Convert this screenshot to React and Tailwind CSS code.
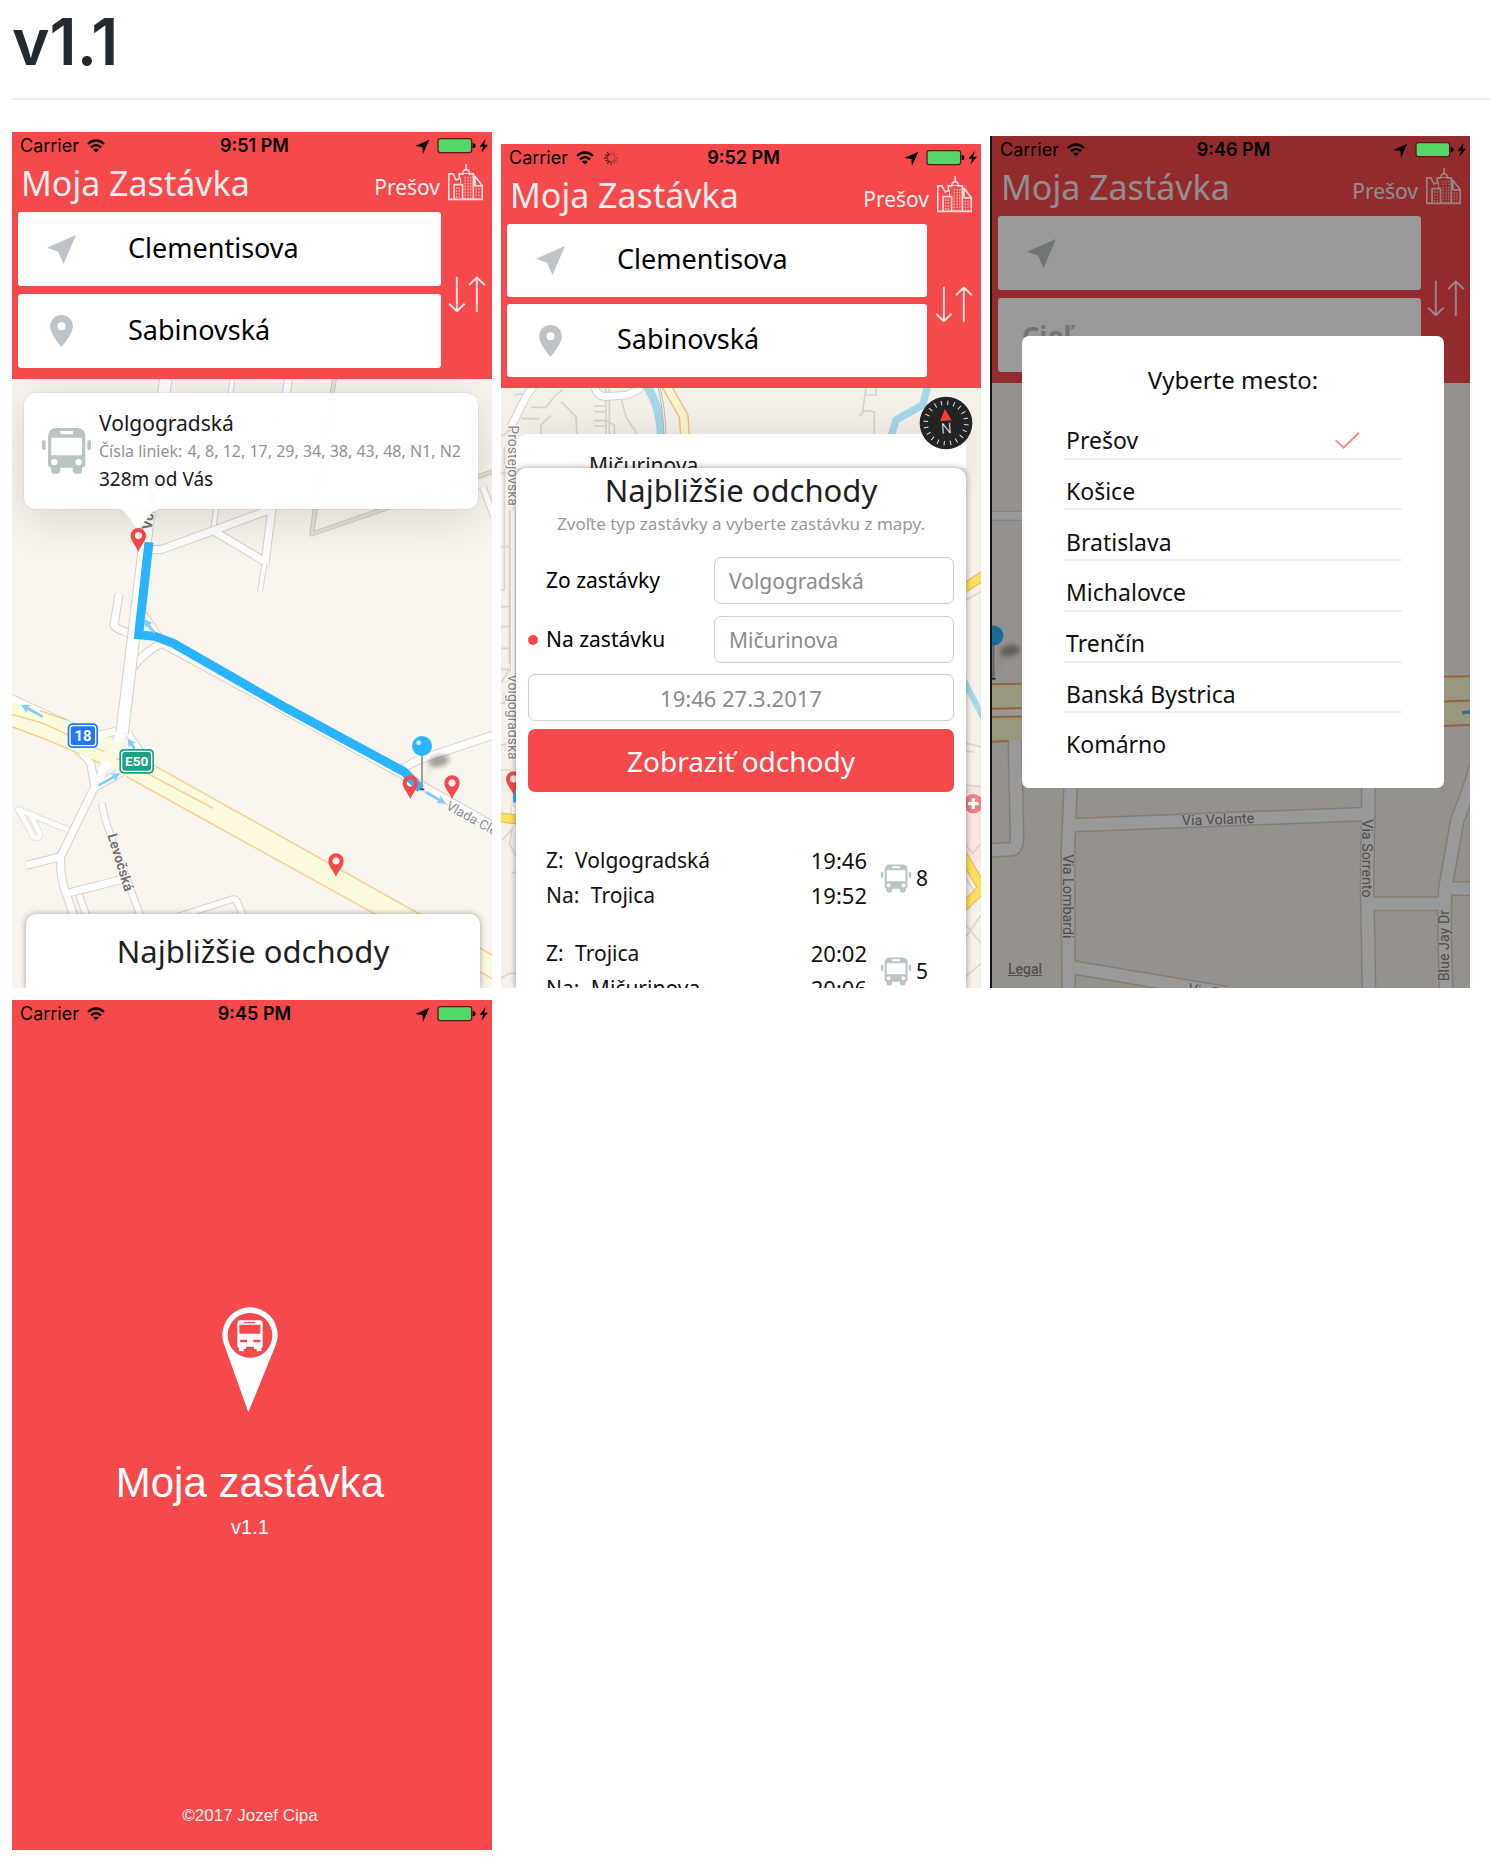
import React from "react";

const BODY = "font-['Noto_Sans',sans-serif]";
const SYSTEM = "font-['Inter',sans-serif]";

/* ---------- icons ---------- */

function WifiIcon() {
  return (
    <svg className="h-[14px] w-[18px]" viewBox="0 0 54 42" fill="none" stroke="#000" strokeWidth="7" aria-hidden="true">
      <path d="M3 15C17 1 37 1 51 15" />
      <path d="M12 25c9-9 21-9 30 0" />
      <path d="M27 40l-9-8c5-5 13-5 18 0z" fill="#000" stroke="none" />
    </svg>
  );
}

function SpinnerIcon() {
  return (
    <svg className="ml-[10px] h-[14px] w-[14px]" viewBox="0 0 42 42" stroke="#000" strokeWidth="3.5" aria-hidden="true">
      <path d="M21 0v12" opacity=".3" />
      <path d="M32 4l-6 9M38 11l-9 5" opacity=".25" />
      <path d="M42 21H30M38 31l-9-5M32 38l-6-9" opacity=".35" />
      <path d="M21 42V30" opacity=".55" />
      <path d="M10 38l6-9M4 31l9-5" opacity=".7" />
      <path d="M0 21h12M4 11l9 5M10 4l6 9" opacity=".85" />
    </svg>
  );
}

function StatusIcons() {
  return (
    <svg className="h-[16px] w-[74px] justify-self-end" viewBox="0 0 222 48" aria-hidden="true">
      <path d="M43 5L1 24l21 3 2 20z" fill="#000" />
      <rect x="69" y="2" width="101" height="42" rx="7" fill="#53d769" stroke="#5a1a1c" strokeWidth="4" />
      <path d="M173 15c7 1 9 5 9 8s-2 7-9 8z" fill="#000" />
      <path d="M212 2l-18 24h10l-5 18 20-24h-11z" fill="#000" />
    </svg>
  );
}

function CityIcon() {
  return (
    <svg className="h-[38px] w-[37px]" viewBox="1343 490 112 116" fill="none" stroke="#fff" strokeOpacity=".8" strokeWidth="5" aria-hidden="true">
      <path d="M1348 523v78h102v-42l-22-28h-5v-8h-12c0-8-4-12-10-13-6 1-10 5-10 13h-11v15l-10 4-9-19z" />
      <path d="M1401 493v17" strokeWidth="5" />
      <path d="M1364 600v-44h26v44M1423 531v69M1429 560h21M1428 532v28" />
      <path d="M1384 536v20M1394 522h20" strokeWidth="3" />
      <path
        d="M1372 564v34M1380 564v34M1398 532v68M1407 532v68M1415 532v68M1432 568v30M1440 568v30"
        strokeWidth="4"
        strokeDasharray="5 4"
        strokeOpacity=".6"
      />
    </svg>
  );
}

function SwapIcon() {
  return (
    <svg className="h-[37px] w-[38px]" viewBox="1348 827 116 112" fill="none" stroke="#fff" strokeOpacity=".82" strokeWidth="6" strokeLinecap="round" strokeLinejoin="round" aria-hidden="true">
      <path d="M1375 831v103M1353 913l22 21 22-21" />
      <path d="M1436 934V831M1414 853l22-22 23 22" />
    </svg>
  );
}

function NavIcon() {
  return (
    <svg className="h-[29px] w-[29px]" viewBox="0 0 86 86" fill="#bdc3c7" aria-hidden="true">
      <path d="M86 0L0 38l33 12 16 36z" />
    </svg>
  );
}

function PlaceIcon() {
  return (
    <svg className="h-[32px] w-[23px]" viewBox="0 0 68 96" fill="#bdc3c7" aria-hidden="true">
      <path fillRule="evenodd" d="M34 0a34 34 0 0 0-34 34c0 24 34 62 34 62s34-38 34-62A34 34 0 0 0 34 0zm0 22a12 12 0 1 1 0 24 12 12 0 0 1 0-24z" />
    </svg>
  );
}

function BusIcon({ className }) {
  return (
    <svg className={className} viewBox="126 174 147 138" fill="#b9c4c7" aria-hidden="true">
      <path
        fillRule="evenodd"
        d="M166 174h68q22 2 22 26v82q0 10-10 11v9q0 9-10 9h-8q-9 0-10-9v-9h-37v9q-1 9-10 9h-8q-10 0-10-9v-9q-9-1-9-11v-82q2-24 22-26zm15 9v10h38v-10zm-27 20v53h92v-53zm9 63a10 10 0 1 0 .1 0zm73 0a10 10 0 1 0 .1 0z"
      />
      <rect x="126" y="210" width="11" height="30" rx="5" />
      <rect x="262" y="210" width="11" height="30" rx="5" />
    </svg>
  );
}

/* ---------- map pieces ---------- */

function Roads({ width, children, casing = "#d9d0c6", fill = "#ffffff", edge = 6 }) {
  return (
    <g fill="none" strokeLinejoin="round">
      <g stroke={casing} strokeWidth={width + edge}>{children}</g>
      <g stroke={fill} strokeWidth={width}>{children}</g>
    </g>
  );
}

function Pin({ x, y }) {
  return (
    <path
      transform={`translate(${x} ${y})`}
      fill="#f5484b"
      fillRule="evenodd"
      d="M0 0c-3-14-23-32-23-49a23 23 0 0 1 46 0C23-32 3-14 0 0zM0-60a11 11 0 1 0 .1 0z"
    />
  );
}

function FlowArrow({ x, y, turn, length = 70 }) {
  return (
    <g transform={`translate(${x} ${y}) rotate(${turn})`} fill="#7fcbff">
      <rect x="0" y="-4" width={length - 18} height="8" />
      <path d={`M${length} 0l-26-13 6 13-6 13z`} />
    </g>
  );
}

function BallPin({ x, y }) {
  return (
    <g transform={`translate(${x} ${y})`}>
      <g filter="url(#soft)" opacity=".35">
        <ellipse cx="50" cy="45" rx="32" ry="17" fill="#000" transform="rotate(-12 50 45)" />
        <path d="M30 55L4 126" stroke="#000" strokeWidth="4" opacity=".4" />
      </g>
      <path d="M0 20v110" stroke="#9aa0a6" strokeWidth="6" />
      <path d="M-7 130h14" stroke="#444" strokeWidth="5" />
      <circle r="30" fill="#2ab4ff" />
      <circle cx="-10" cy="-10" r="7" fill="#d9f1ff" />
    </g>
  );
}

const halo = { paintOrder: "stroke", stroke: "#ffffff", strokeWidth: 6, strokeLinejoin: "round" };

function RouteMap() {
  return (
    <svg className="col-start-1 row-start-1 h-full w-full" viewBox="36 27 1440 1827" preserveAspectRatio="xMidYMin slice" fontFamily="Roboto, sans-serif" aria-label="Mapa" role="img">
      <defs>
        <filter id="soft" x="-50%" y="-50%" width="200%" height="200%">
          <feGaussianBlur stdDeviation="8" />
        </filter>
      </defs>
      <rect x="36" y="27" width="1440" height="1827" fill="#f9f4ed" />
      <Roads width={9} casing="#cdccba" fill="#e3e3d4"><path d="M1003 27L935 492L1480 304" /></Roads>
      <Roads width={12}>
        <path d="M697 27L640 480M795 570L780 665" />
      </Roads>
      <Roads width={14} casing="#e6e0d8"><path d="M210 1382L55 1318L100 1400Q118 1410 120 1392L92 1335" /></Roads>
      <Roads width={17}>
        <path d="M305 1300Q315 1350 330 1390L422 1640M235 1570L264 1650M535 1640L695 1588Q708 1585 714 1600L733 1650" />
        <path d="M1448 350L1482 440M428 730L482 805M385 1090L425 1150" />
      </Roads>
      <Roads width={21}>
        <path d="M455 540L485 538L640 482L820 415M640 482L795 575M865 27L795 580" />
        <path d="M357 672L342 765Q342 775 390 790M490 818Q440 840 400 890" />
        <path d="M80 1486L182 1460M200 1570L372 1527M290 1098L360 1080" />
        <path d="M490 822L1210 1215L1290 1260L1480 1368M1200 1200L1250 1172L1480 1095" />
        <path d="M285 1252L272 1180Q262 1160 230 1140M285 1252L385 1195" />
        <path d="M355 1100L283 1252L182 1460Q180 1530 200 1575L225 1650M320 1180L290 1252" />
      </Roads>
      <Roads width={34}>
        <path d="M497 27L435 520L366 1090" />
      </Roads>
      <Roads width={20}><path d="M20 978L130 1030L240 1080" /></Roads>
      <path d="M36 995L130 1025L200 1055L460 1185L1255 1630L1480 1757V1828L1125 1632L380 1220L280 1170L130 1105L36 1070z" fill="#fcf9dc" />
      <g fill="none" stroke="#f3cb86" strokeWidth="4">
        <path d="M120 1022L200 1050M460 1185L1255 1630L1480 1757M36 1070L130 1105L240 1152M275 1168L300 1180M380 1220L1125 1632L1480 1828" />
        <path d="M36 1033L130 1060L315 1146M345 1162L460 1220L640 1315" />
      </g>
      <path d="M342 1160L362 1090M305 1205L325 1175" stroke="#fff" strokeWidth="28" />
      <path d="M300 1110L365 1132M315 1145L350 1165" stroke="#fcf9dc" strokeWidth="26" />
      <g fill="#77736f" fontSize="42" fontWeight="700" style={halo}>
        <text transform="translate(322 1396) rotate(73)">Levočská</text>
        <text transform="translate(455 480) rotate(-83)">Volgogradská</text>
      </g>
      <text transform="translate(832 365) rotate(-86)" fontSize="38" fill="#d5d0c8">Volgogradská</text>
      <path d="M447 517L416 794L465 799L520 820L860 1015L1212 1205L1262 1256" fill="none" stroke="#2ab4ff" strokeWidth="27" />
      <text transform="translate(1336 1316) rotate(29)" fontSize="40" fill="#8d8d8d" style={halo}>Vlada Clementisa</text>
      <FlowArrow x={128} y={1040} turn={209} length={74} />
      <FlowArrow x={296} y={1246} turn={-29} length={74} />
      <FlowArrow x={404} y={1136} turn={236} length={38} />
      <FlowArrow x={464} y={790} turn={234} length={54} />
      <FlowArrow x={1277} y={1266} turn={30} length={70} />
      <g fontWeight="700" textAnchor="middle" fill="#fff">
        <rect x="203" y="1060" width="91" height="74" rx="14" fill="#2378f5" />
        <rect x="210" y="1067" width="77" height="60" rx="9" fill="#2378f5" stroke="#fff" strokeWidth="4" />
        <text x="249" y="1113" fontSize="44">18</text>
        <rect x="358" y="1137" width="104" height="74" rx="14" fill="#1ba283" />
        <rect x="365" y="1144" width="90" height="60" rx="9" fill="#1ba283" stroke="#fff" strokeWidth="4" />
        <text x="410" y="1189" fontSize="41">E50</text>
      </g>
      <Pin x={415} y={546} />
      <Pin x={1231} y={1288} />
      <BallPin x={1266} y={1128} />
      <Pin x={1356} y={1288} />
      <Pin x={1008} y={1522} />
    </svg>
  );
}

function TownMap() {
  return (
    <svg className="col-start-1 row-start-1 h-full w-full" viewBox="30 774 1440 1800" preserveAspectRatio="xMidYMin slice" fontFamily="Roboto, sans-serif" aria-label="Mapa" role="img">
      <rect x="30" y="774" width="1440" height="1800" fill="#f5f0e9" />
      <path d="M1425 1975L1480 1960V2180L1425 2220z" fill="#f9e3e1" />
      <g fill="none" stroke="#d9d5cc" strokeWidth="5">
        <path d="M70 795L100 790M120 832H165L190 800L215 778M90 866H145M30 920L70 890M150 930V885L180 857M210 815L255 860L258 915" />
        <path d="M345 774V915M355 774V915M310 828H345M310 845H345M310 872H345M310 888H345M340 870L370 885V915M390 805L405 860L440 915" />
        <path d="M1125 774L1115 842L1150 845V915M1125 795H1155V774M1105 858L1120 842" />
        <path d="M30 1030H60M40 950V1380H30M55 1140V1600M55 1250H30M55 1430H30M55 1490H30M55 1555H30M30 1618H55L30 1660M40 1690V1720H30M30 1845L55 1840M30 1920H60" />
        <path d="M60 2100L35 2130M65 2090L55 2140L75 2180M62 2230L75 2225M1425 1410L1470 1385M1425 1840L1470 1850M1425 1865H1450M1425 1965L1470 1970" />
        <path d="M1425 2145L1445 2170L1470 2140M1425 2245L1450 2285L1425 2310M1425 2385L1470 2440M1425 2420L1470 2355M1425 2540L1470 2500M30 2545L55 2530H75" />
      </g>
      <Roads width={20}><path d="M130 765L105 800L60 890M310 770Q320 800 345 800L410 795L450 774" /></Roads>
      <Roads width={12} edge={5}><path d="M66 1140V1640M68 2030V2080" /></Roads>
      <path d="M465 765Q510 830 510 920" stroke="#a3d7ea" strokeWidth="26" fill="none" />
      <path d="M505 774Q520 840 522 915" stroke="#b5b0aa" strokeWidth="9" fill="none" />
      <path d="M505 774Q520 840 522 915" stroke="#eeeae4" strokeWidth="4" fill="none" />
      <path d="M1310 770L1295 825L1215 870L1200 920" stroke="#a3d7ea" strokeWidth="22" fill="none" strokeLinejoin="round" />
      <Roads width={22} casing="#f0bd7e" fill="#fbf5cf" edge={8}><path d="M525 765L578 858L582 920" /></Roads>
      <Roads width={24} casing="#eeb46a" fill="#fcdf5a" edge={6}><path d="M1420 1374L1480 1335M1415 2175L1475 2275L1418 2330M25 2062L90 2070" /></Roads>
      <path d="M1418 1650L1480 1770" stroke="#a3d7ea" strokeWidth="18" />
      <circle cx="1447" cy="2021" r="29" fill="#ee8085" />
      <path d="M1447 2005v32M1431 2021h32" stroke="#fff" strokeWidth="10" />
      <g fill="#8a8681" fontSize="42" style={halo}>
        <text transform="translate(52 886) rotate(90)">Prostejovská</text>
        <text transform="translate(50 1632) rotate(90)">Volgogradská</text>
      </g>
      <rect x="66" y="1985" width="12" height="32" fill="#2ab4ff" />
      <Pin x={68} y={1996} />
    </svg>
  );
}

function StreetMap() {
  return (
    <svg className="col-start-1 row-start-1 h-full w-full" viewBox="30 786 1440 1818" preserveAspectRatio="xMidYMin slice" fontFamily="Roboto, sans-serif" aria-label="Mapa" role="img">
      <rect x="30" y="786" width="1440" height="1818" fill="#f9f4ed" />
      <Roads width={24} casing="#decfc0"><path d="M30 1185H140" /></Roads>
      <Roads width={36} casing="#decfc0" edge={9}>
        <path d="M100 1840L107 2150Q108 2190 85 2187L30 2190" />
        <path d="M268 2000L260 2190L262 2620M1163 2000L1159 2300L1165 2620" />
        <path d="M265 2115L1160 2081M1160 2351H1395M1400 2305H1480M262 2540L740 2620" />
        <path d="M1490 1925Q1470 2000 1430 2100L1393 2310L1392 2450L1397 2620" />
      </Roads>
      <path d="M30 1691L1480 1667V1814L30 1862z" fill="#fdfdd6" />
      <path d="M30 1764L140 1763V1788L30 1790z" fill="#fff" />
      <path d="M30 1691L1480 1667M30 1765L130 1763M30 1790L130 1788M1390 1743L1480 1740M1390 1817L1480 1812M30 1864L82 1862" stroke="#f0a560" strokeWidth="6" />
      <path d="M1445 1777L1480 1773" stroke="#4db8f0" strokeWidth="10" />
      <g fill="#85817c" fontSize="43" style={halo}>
        <text transform="translate(603 2116) rotate(-2)">Via Volante</text>
        <text transform="translate(245 2202) rotate(90)">Via Lombardi</text>
        <text transform="translate(1145 2097) rotate(90)">Via Sorrento</text>
        <text transform="translate(1405 2584) rotate(-90)">Blue Jay Dr</text>
        <text transform="translate(620 2620) rotate(9)">Via Toscana</text>
      </g>
      <BallPin x={36} y={1545} />
    </svg>
  );
}

function Compass() {
  const ticks = Array.from({ length: 20 }, (_, i) => i * 18 + 5);
  return (
    <svg className="absolute top-2 right-2 h-[54px] w-[54px]" viewBox="-81 -81 162 162" aria-label="Kompas" role="img">
      <circle r="79" fill="#232323" />
      {ticks.map((t) => (
        <path key={t} d="M0-68v14" stroke="#e5e5e5" strokeWidth="3" transform={`rotate(${t})`} />
      ))}
      <g transform="rotate(-4)">
        <path d="M0-42l17 35h-34z" fill="#ff3b30" />
        <text y="31" fontSize="44" textAnchor="middle" fill="#fff" fontFamily="Roboto, sans-serif" fontWeight="300">N</text>
      </g>
    </svg>
  );
}

/* ---------- shared screen parts ---------- */

function StatusBar({ time, loading }) {
  return (
    <div className={`${SYSTEM} relative z-10 grid h-[26px] grid-cols-[1fr_auto_1fr] items-center pr-[3px] pl-2 text-[18px] text-black`}>
      <div className="flex items-center">
        <span className="mr-2">Carrier</span>
        <WifiIcon />
        {loading && <SpinnerIcon />}
      </div>
      <span className="font-semibold">{time}</span>
      <StatusIcons />
    </div>
  );
}

function SearchField({ id, label, value, icon, tall }) {
  return (
    <div className={`flex items-center rounded-[3px] bg-white ${tall ? "h-[74px]" : "h-[73px]"}`}>
      <label htmlFor={id} className="flex w-[86px] shrink-0 justify-center" aria-label={label}>
        {icon}
      </label>
      <input id={id} type="text" defaultValue={value} className="h-full w-full min-w-0 bg-transparent pl-6 pb-1 text-[27px] text-black outline-none" />
    </div>
  );
}

function AppHeader({ id, time, loading, from, to, blank, tall = true }) {
  return (
    <header className="bg-[#f6494c] pb-[11px]">
      <StatusBar time={time} loading={loading} />
      <div className="mb-1 flex h-[50px] items-center justify-between pr-2 pl-[9px] text-[#eeeeee]">
        <h2 className="text-[34px] leading-[50px] whitespace-nowrap">Moja Zastávka</h2>
        <button type="button" className="flex items-center gap-[7px] pb-[2px]">
          <span className="pt-3 text-[21px]">Prešov</span>
          <CityIcon />
        </button>
      </div>
      <div className="flex pl-[6px]">
        <div className={`flex flex-1 flex-col ${tall ? "gap-2" : "gap-[7px]"}`}>
          <SearchField id={`${id}-from`} label="Štart" value={from} icon={<NavIcon />} tall={tall} />
          {blank ? (
            <div className="flex h-[74px] items-center rounded-[3px] bg-white">
              <input
                type="text"
                aria-label="Cieľ"
                placeholder="Cieľ"
                className="h-full w-full min-w-0 bg-transparent pl-6 text-[27px] font-bold outline-none placeholder:text-[#bdc3c7]"
              />
            </div>
          ) : (
            <SearchField id={`${id}-to`} label="Cieľ" value={to} icon={<PlaceIcon />} tall={tall} />
          )}
        </div>
        <button
          type="button"
          aria-label="Vymeniť"
          className={`flex items-center justify-center pt-2 ${blank ? "w-[49px]" : tall ? "w-[51px]" : "w-[54px]"}`}
        >
          <SwapIcon />
        </button>
      </div>
    </header>
  );
}

/* ---------- screens ---------- */

const PHONE = `${BODY} w-full max-w-[480px] overflow-hidden`;

function RouteScreen() {
  return (
    <article className={PHONE}>
      <AppHeader id="route" time="9:51 PM" from="Clementisova" to="Sabinovská" />
      <div className="grid h-[609px] overflow-hidden">
        <RouteMap />
        <div className="relative col-start-1 row-start-1 flex flex-col">
          <div className="mr-[14px] ml-3 mt-[14px] flex h-[116px] items-center rounded-xl bg-white/97 pl-[18px] shadow-[0_8px_50px_rgba(0,0,0,0.14),0_0_2px_rgba(0,0,0,0.15)]">
            <BusIcon className="mr-2 h-[46px] w-[49px] shrink-0" />
            <div className="leading-7 whitespace-nowrap">
              <p className="text-[21px] text-[#1a1a1a]">Volgogradská</p>
              <p className="text-[16px] text-[#929292]">
                Čísla liniek: <span className="ml-px">4, 8, 12, 17, 29, 34, 38, 43, 48, N1, N2</span>
              </p>
              <p className="text-[19px] text-[#1a1a1a]">328m od Vás</p>
            </div>
          </div>
          <svg className="ml-[107px] h-5 w-10" viewBox="0 0 40 20" fill="#fff" fillOpacity=".97" aria-hidden="true">
            <path d="M0 0h40q-6 2-9 6L21 18q-2 2-4 0L8 6Q5 1 0 0z" />
          </svg>
          <button type="button" className="mr-3 ml-[14px] mt-auto h-[74px] rounded-t-[10px] bg-white text-[31px] text-[#1f1f1f] shadow-[0_0_6px_rgba(0,0,0,0.35)]">
            Najbližšie odchody
          </button>
        </div>
      </div>
    </article>
  );
}

const departures = [
  { from: "Volgogradská", to: "Trojica", leave: "19:46", arrive: "19:52", line: "8" },
  { from: "Trojica", to: "Mičurinova", leave: "20:02", arrive: "20:06", line: "5" },
];

const OUTLINED = "h-[47px] w-full min-w-0 rounded-[7px] border border-[#cfcfcf] bg-white text-[#8c8c8c] outline-none";

function DeparturesScreen() {
  return (
    <article className={PHONE}>
      <AppHeader id="dep" time="9:52 PM" loading from="Clementisova" to="Sabinovská" tall={false} />
      <div className="relative grid h-[600px] overflow-hidden">
        <TownMap />
        <div className="relative col-start-1 row-start-1 flex min-h-0 flex-col px-[15px] pt-[46px]">
          <div className="h-[34px] shrink-0 overflow-hidden rounded-t-xl bg-white/97 pt-[17px] pl-[73px] text-[21px] leading-7 text-[#1a1a1a] shadow-[0_0_40px_rgba(0,0,0,0.1)]">
            Mičurinova
          </div>
          <section className="flex min-h-0 flex-1 flex-col rounded-t-[10px] bg-white px-3 pt-1 shadow-[0_0_6px_rgba(0,0,0,0.4)]">
            <h3 className="text-center text-[31px] leading-9 whitespace-nowrap text-[#1f1f1f]">Najbližšie odchody</h3>
            <p className="mt-1 text-center text-[17px] leading-6 whitespace-nowrap text-[#999999]">Zvoľte typ zastávky a vyberte zastávku z mapy.</p>
            <form className="mt-[21px] flex flex-col" onSubmit={(e) => e.preventDefault()}>
              <div className="grid grid-cols-[186px_1fr] items-center gap-y-3">
                <label htmlFor="stop-from" className="pl-[18px] text-[21px] text-black">Zo zastávky</label>
                <input id="stop-from" type="text" defaultValue="Volgogradská" className={`${OUTLINED} px-[14px] text-[21px]`} />
                <label htmlFor="stop-to" className="flex items-center gap-2 text-[21px] text-black">
                  <span className="h-[10px] w-[10px] rounded-full bg-[#f6494c]" />
                  Na zastávku
                </label>
                <input id="stop-to" type="text" defaultValue="Mičurinova" className={`${OUTLINED} px-[14px] text-[21px]`} />
              </div>
              <input type="text" aria-label="Čas a dátum" defaultValue="19:46 27.3.2017" className={`${OUTLINED} mt-[11px] text-center text-[22px]`} />
              <button type="submit" className="mt-2 h-[63px] rounded-[7px] bg-[#f6494c] text-[28px] text-white">Zobraziť odchody</button>
            </form>
            <ul className="mt-[51px] flex flex-col gap-[23px] pr-[26px] pl-[18px] text-[21px] leading-[35px] text-[#111111]">
              {departures.map((d) => (
                <li key={d.leave} className="flex items-center">
                  <div className="flex-1">
                    <p>Z: <span className="ml-[6px]">{d.from}</span></p>
                    <p>Na: <span className="ml-[6px]">{d.to}</span></p>
                  </div>
                  <div className="text-right text-[22px]">
                    <p>{d.leave}</p>
                    <p>{d.arrive}</p>
                  </div>
                  <BusIcon className="ml-[14px] h-[29px] w-[30px]" />
                  <span className="ml-[5px]">{d.line}</span>
                </li>
              ))}
            </ul>
          </section>
        </div>
        <Compass />
      </div>
    </article>
  );
}

const cities = ["Prešov", "Košice", "Bratislava", "Michalovce", "Trenčín", "Banská Bystrica", "Komárno"];

function CityScreen() {
  return (
    <article className={`${PHONE} grid`}>
      <div className="col-start-1 row-start-1 border-l-2 border-[#222222]">
        <AppHeader id="city" time="9:46 PM" from="" blank />
        <div className="grid h-[605px] overflow-hidden">
          <StreetMap />
          <a href="#legal" className="col-start-1 row-start-1 mb-2 ml-4 self-end justify-self-start font-['Roboto',sans-serif] text-[14px] font-medium text-[#8a8681] underline">
            Legal
          </a>
        </div>
      </div>
      <div className="col-start-1 row-start-1 flex items-start bg-black/40 pt-[200px] pr-[26px] pl-8">
        <section role="dialog" aria-label="Vyberte mesto" className="flex flex-1 flex-col rounded-[7px] bg-white px-[42px] pt-[27px] pb-6">
          <h3 className="text-center text-[24px] leading-[34px] text-[#111111]">Vyberte mesto:</h3>
          <ul className="mt-3 grid h-[355px] grid-rows-7 text-[23px] text-[#111111]">
            {cities.map((city, i) => (
              <li key={city} className="border-b-2 border-[#f0f0f0] last:border-transparent">
                <button type="button" className="flex h-full w-full items-center justify-between pt-[14px] pr-[42px] pl-[2px] text-left">
                  {city}
                  {i === 0 && (
                    <svg className="h-[17px] w-[25px]" viewBox="0 0 75 51" fill="none" stroke="#ff8a8a" strokeWidth="6" aria-label="vybrané">
                      <path d="M2 25l24 22L72 2" />
                    </svg>
                  )}
                </button>
              </li>
            ))}
          </ul>
        </section>
      </div>
    </article>
  );
}

function SplashScreen() {
  return (
    <article className="flex min-h-[850px] w-full max-w-[480px] flex-col items-stretch bg-[#f6494c] pb-6 text-center font-['Liberation_Sans',sans-serif] text-white">
      <StatusBar time="9:45 PM" />
      <div className="flex flex-1 flex-col pr-1 pt-[281px]">
        <svg className="h-[106px] w-[56px] self-center" viewBox="398 80 168 318" aria-hidden="true">
          <path
            fill="#fff"
            fillRule="evenodd"
            d="M482 81a83 83 0 0 1 83 84c0 12-3 22-7 32l-81 199-71-199c-4-10-7-20-7-32a83 83 0 0 1 83-84zm0 17a67 67 0 1 0 .1 0z"
          />
          <path
            fill="#fff"
            fillRule="evenodd"
            d="M451 120h61q8 1 8 9v68q0 5-4 6v10h-14v-7h-8v-7h-24v7h-7v7h-14v-10q-5-1-5-6v-68q0-8 7-9zm13 5v4h34v-4zm-14 8v27h63v-27zm3 45v8h20v-8zm39 0v8h21v-8z"
          />
        </svg>
        <h2 className="mt-[46px] text-[42px] leading-[48px]">Moja zastávka</h2>
        <p className="mt-2 text-[20px] leading-6">v1.1</p>
        <p className="mt-auto text-[17px] leading-5 text-[#fff0f0]">©2017 Jozef Cipa</p>
      </div>
    </article>
  );
}

export default function App() {
  return (
    <main className="bg-white pt-px pb-5 pl-3">
      <h1 className={`${SYSTEM} border-b-2 border-[#eaecef] pb-4 text-[64px] leading-[81px] font-semibold text-[#24292e]`}>v1.1</h1>
      <div className="mt-8 flex flex-wrap items-end gap-x-[9px] gap-y-3">
        <RouteScreen />
        <DeparturesScreen />
        <CityScreen />
        <SplashScreen />
      </div>
    </main>
  );
}
